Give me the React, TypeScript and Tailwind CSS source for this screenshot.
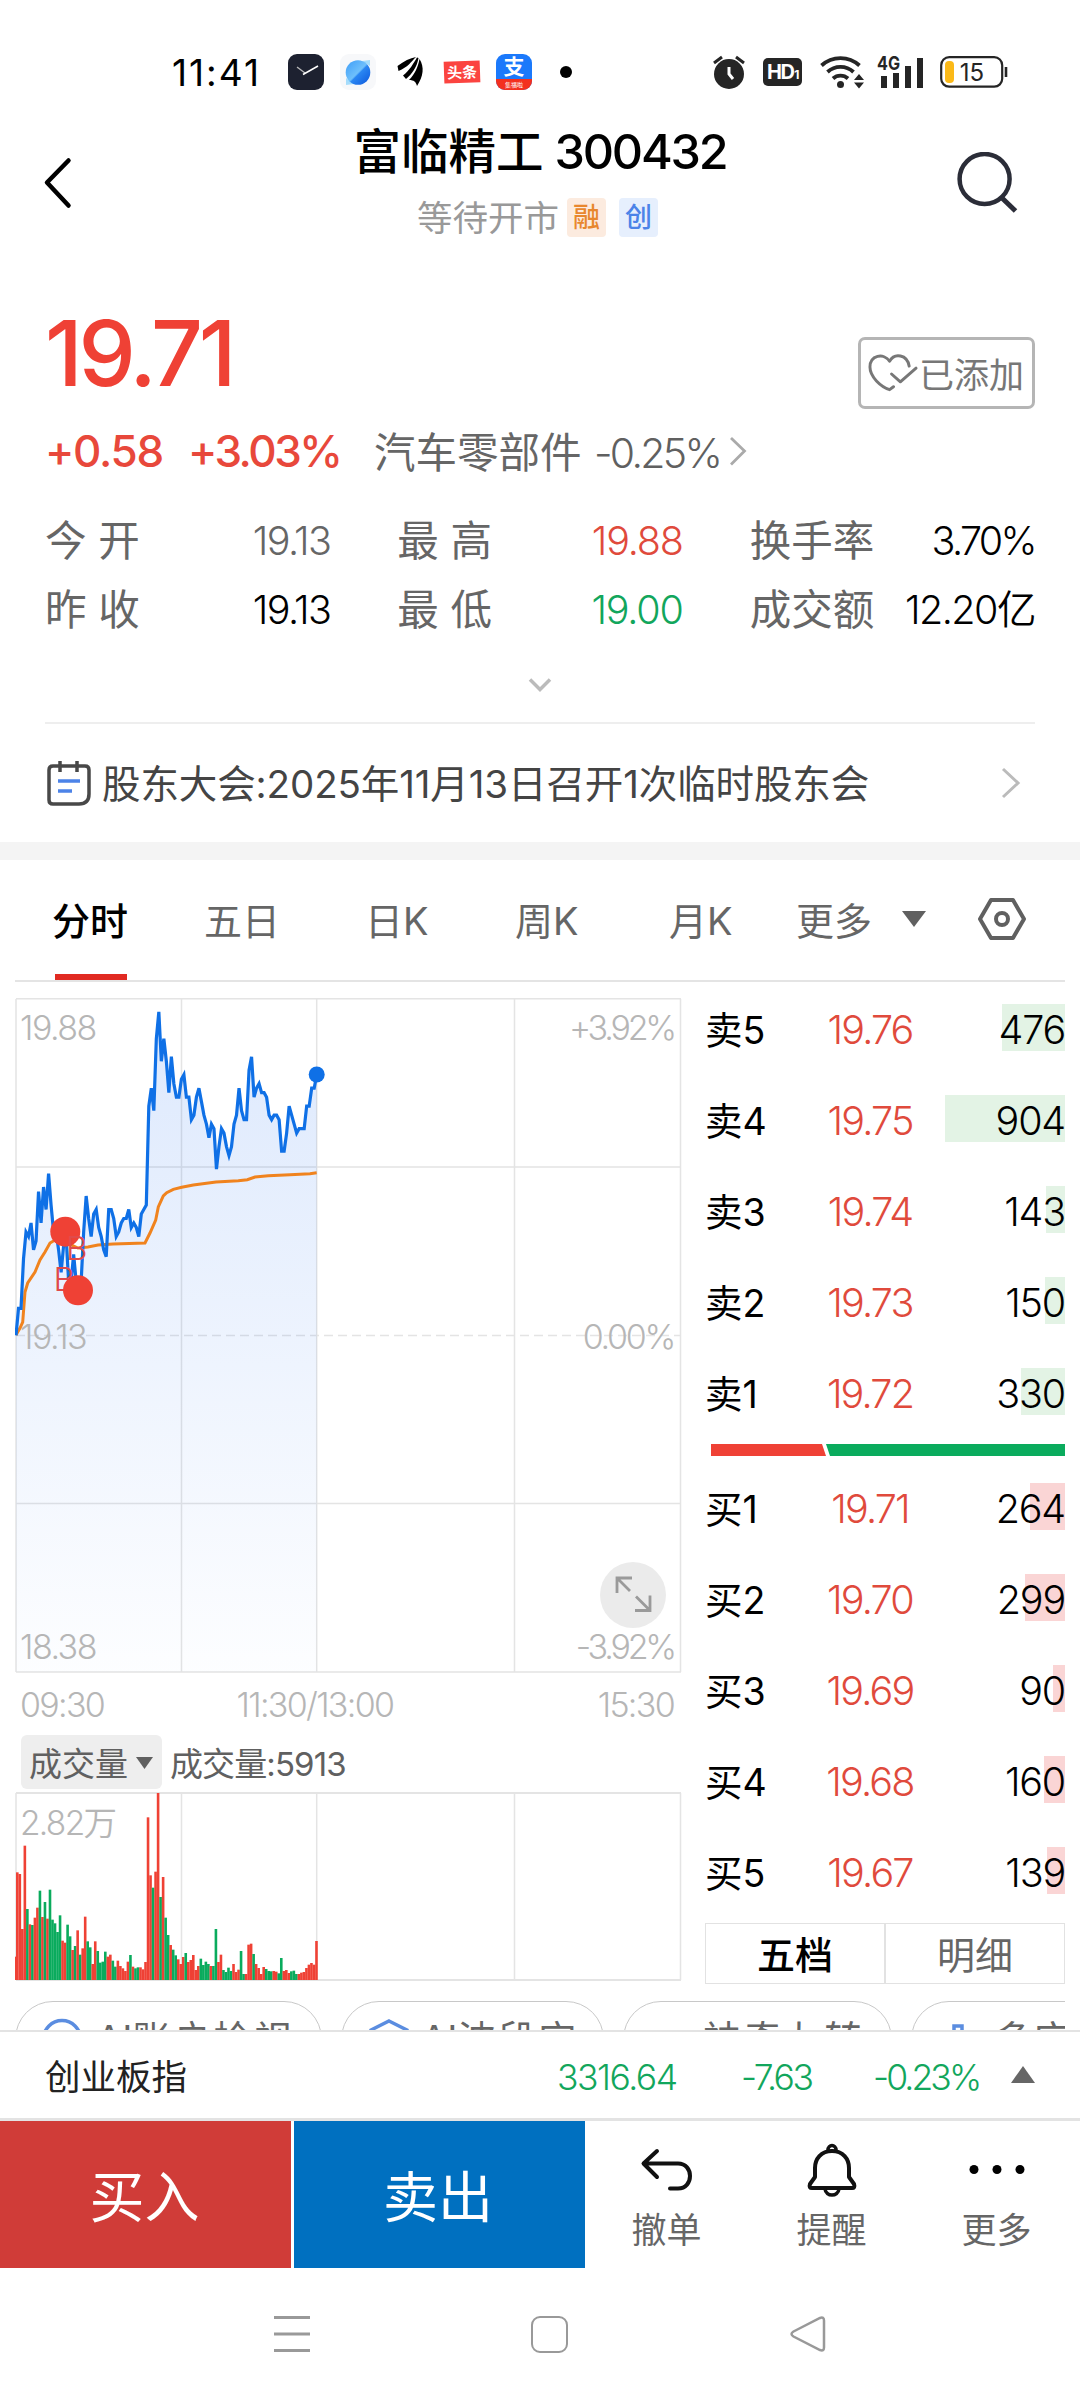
import { ReactNode } from "react";

// intraday prices, in cents above the previous close (19.13)
const prices = [
  0, 6, 6, 17, 23, 22, 25, 19, 21, 32, 25, 33, 28, 36, 29, 23, 23, 19, 14, 20,
  22, 12, 12, 18, 12, 12, 12, 23, 31, 26, 22, 27, 28, 24, 22, 19, 17.5, 28, 28,
  26, 22, 23, 25, 26, 26, 28, 24, 25, 24, 22, 27, 28, 29, 51, 55, 50, 66, 72,
  61, 66, 61, 54, 62, 56, 53, 53, 57, 58, 53, 53, 48, 49, 53, 55, 52, 49, 47,
  44, 47, 46, 37, 42, 46, 45, 42, 40, 42, 47, 49, 55, 50, 48, 48, 59, 62, 53,
  55, 56, 54, 54, 53, 49, 48, 49, 49, 48, 41, 41, 45, 51, 49, 47, 45, 46, 46,
  46, 51, 51, 55, 55, 58,
];

// negative = falling minute
const volumes = [
  70, 323, 318, 153, 403, -213, 167, -165, 187, 217, -268, 189, -234, 184,
  -271, -181, -170, -144, -194, 118, 112, -166, -131, 90, -102, 149, -76, 95,
  190, -116, -98, 48, 116, -87, -52, -55, -85, 70, 76, -58, -40, 58, 42, 35,
  27, 55, -75, 40, -35, -38, 38, 32, 54, 488, 314, -277, 325, 561, -249, 309,
  -187, -135, 105, -91, -74, 62, 48, 69, -81, 54, 60, 75, 30, 42, -64, -45,
  -55, -48, 42, -42, -153, 54, 76, -30, -24, -37, -27, 48, 24, 31, -87, -18,
  18, 106, 109, -78, 48, 36, 18, 39, -33, -27, -26, 27, 25, -20, -66, 27, 30,
  21, -26, -28, -18, 18, 22, 24, 36, 46, 51, 46, 117,
];

const average =
  "1,337 5,330 7.7,324 10,294 12.7,285 20,274 25,262 30,254 35,245 40,242 52,245 63,250 73,249 83,247 98,246 130,245 135,235 140.7,222 143.3,209 148.3,198 151.7,194.7 158.3,191.3 166.7,189.3 178.3,187 201,184 223.3,182.7 232.3,181.7 240,179 253.3,177.7 275,176.7 295,175.7 301.7,174.7";

const sells = [
  { label: "卖5", price: "19.76", amount: 476 },
  { label: "卖4", price: "19.75", amount: 904 },
  { label: "卖3", price: "19.74", amount: 143 },
  { label: "卖2", price: "19.73", amount: 150 },
  { label: "卖1", price: "19.72", amount: 330 },
];

const buys = [
  { label: "买1", price: "19.71", amount: 264 },
  { label: "买2", price: "19.70", amount: 299 },
  { label: "买3", price: "19.69", amount: 90 },
  { label: "买4", price: "19.68", amount: 160 },
  { label: "买5", price: "19.67", amount: 139 },
];

const stats = [
  { label: "今 开", value: "19.13", style: "tracking-[-1.6px] text-[#666]" },
  { label: "最 高", value: "19.88", style: "tracking-[-1.2px] text-[#e04a3c]" },
  { label: "换手率", value: "3.70%", style: "tracking-[-2.6px] text-black" },
  { label: "昨 收", value: "19.13", style: "tracking-[-1.6px] text-black" },
  { label: "最 低", value: "19.00", style: "tracking-[-1.2px] text-[#12a65c]" },
  { label: "成交额", value: "12.20亿", style: "tracking-[-1.5px] text-black" },
];

const StatusBar = () => (
  <div className="flex h-[120px] items-center pl-[172px] pt-[24px]">
    <span className="w-[116px] text-[37px] tracking-[2px]">11:41</span>
    <svg className="mr-4 size-9" viewBox="0 0 36 36">
      <rect width="36" height="36" rx="9" fill="#1d2130" />
      <path d="M9 13l8 6" stroke="#bbb" strokeWidth="1.3" />
      <path d="M15 20.500l15-8.500" stroke="#fff" strokeWidth="1.500" />
    </svg>
    <svg className="mr-4 size-9" viewBox="0 0 36 36">
      <defs>
        <linearGradient id="planet" x1="0" y1="0" x2="1" y2="1">
          <stop offset="0" stopColor="#3d9df8" />
          <stop offset="0.5" stopColor="#6fc0fb" />
          <stop offset="0.55" stopColor="#2a86f2" />
          <stop offset="1" stopColor="#0b56dc" />
        </linearGradient>
      </defs>
      <rect width="36" height="36" rx="9" fill="#f7f8fa" />
      <path d="M22 7l8-1v6zM6 24v7l8-1z" fill="#a5dcfb" />
      <circle cx="18" cy="18.500" r="12.300" fill="url(#planet)" />
    </svg>
    <svg className="mr-4 size-9" viewBox="0 0 36 36">
      <path d="M5.500 12C12 7 18 4 24 3c-5 5-8 10-17.500 14z" />
      <path d="M11 21.500C18 16 21 10 25 3.500l1.500.500C25 13 20 20 14 25z" />
      <path d="M17 26c6-6 9-13 10.500-21 5 8 4 17-2.500 27-1-4-3-6-8-6z" />
    </svg>
    <div className="mr-4 flex h-[22px] w-9 -rotate-2 items-center justify-center bg-[#fb4440] text-[15px] font-bold text-white">
      头条
    </div>
    <div className="flex size-9 flex-col items-center overflow-hidden rounded-[9px] bg-[#1b79fb] text-white">
      <span className="flex h-[25px] items-center text-[21px] font-bold">支</span>
      <span className="flex w-full grow items-center justify-center bg-[#f3301f] text-[6px]">
        集福啦
      </span>
    </div>
    <div className="ml-[28px] size-3 rounded-full bg-black" />
    <svg className="ml-[140px] h-[36px] w-[34px]" viewBox="0 0 34 36">
      <circle cx="17" cy="20" r="15" fill="#252525" />
      <path d="M2 9l8-6M32 9l-8-6" stroke="#252525" strokeWidth="3" />
      <path d="M17 13v7l4 5" stroke="#fff" strokeWidth="3" fill="none" />
    </svg>
    <div className="ml-[17px] flex h-[28px] w-[39px] items-center justify-center rounded-[5px] bg-[#252525] font-bold tracking-[-1.5px] text-white">
      <span className="text-[20px]">HD</span>
      <span className="pl-[1px] pt-1.5 text-[12px]">1</span>
    </div>
    <svg className="ml-[18px] h-[36px] w-[46px]" viewBox="0 0 46 36">
      <g fill="none" stroke="#252525" strokeWidth="3.800">
        <path d="M1.500 11.500a28 28 0 0 1 38 0" />
        <path d="M7.500 18a19 19 0 0 1 26 0" />
        <path d="M13 24.500a11 11 0 0 1 15 0" />
      </g>
      <circle cx="20.500" cy="30.500" r="3.500" fill="#252525" />
      <path d="M34 26l5-6 5 6zM34 28.500l5 6 5-6z" fill="#252525" />
    </svg>
    <svg className="ml-[11px] h-[36px] w-[48px]" viewBox="0 0 48 36">
      <text x="0" y="16" fontSize="19" fontWeight="700" fill="#252525" textLength="23" lengthAdjust="spacingAndGlyphs">
        4G
      </text>
      <path d="M4 22h6v12H4zM16 19h6v15h-6zM28 12h6v22h-6zM40 4h6v30h-6z" fill="#252525" />
    </svg>
    <svg className="ml-[15px] h-[32px] w-[68px]" viewBox="0 0 68 32">
      <rect x="1.200" y="1.200" width="61" height="29.500" rx="8" fill="none" stroke="#252525" strokeWidth="2.200" />
      <rect x="5" y="5" width="9" height="22" rx="4" fill="#fbb918" />
      <path d="M66 11v10" stroke="#252525" strokeWidth="2.600" />
      <text x="32" y="24.500" fontSize="24" fill="#252525" textAnchor="middle">
        15
      </text>
    </svg>
  </div>
);

const Header = () => (
  <div className="flex h-[130px] items-center justify-between pl-[43px] pr-[60px]">
    <svg className="mb-[5px] h-[52px] w-[30px]" viewBox="0 0 30 52" fill="none" stroke="#000" strokeWidth="4.500" strokeLinecap="round" strokeLinejoin="round">
      <path d="M25.500 3.500L4 25.500l21.500 23" />
    </svg>
    <div className="flex h-full flex-col items-center pl-[51px]">
      <h1 className="mt-[9px] flex h-[46px] items-center gap-[11px] font-medium">
        <span className="text-[47.500px]">富临精工</span>
        <span className="text-[48.500px] tracking-[-2.200px]">300432</span>
      </h1>
      <div className="mr-[5px] mt-[21px] flex h-[42px] items-center">
        <span className="pt-[4px] text-[35.500px] text-[#999]">等待开市</span>
        <span className="ml-[8px] flex size-[39px] items-center justify-center rounded-[4px] bg-[#fcebdf] text-[27px] font-medium text-[#e8872e]">
          融
        </span>
        <span className="ml-[13px] flex size-[39px] items-center justify-center rounded-[4px] bg-[#e6effd] text-[27px] font-medium text-[#4c83e8]">
          创
        </span>
      </div>
    </div>
    <svg className="mb-[4px] h-[62px] w-[64px]" viewBox="0 0 64 62" fill="none" stroke="#2b2d38" strokeWidth="4.500">
      <circle cx="28.600" cy="27" r="25" />
      <path d="M45.500 45.500L59.500 59" strokeWidth="5" />
    </svg>
  </div>
);

const Quote = () => (
  <div className="flex h-[472px] flex-col px-[45px]">
    <div className="mt-[57px] flex h-[102px] items-center justify-between">
      <span className="pb-[10px] text-[91px] font-medium tracking-[-4.200px] text-[#ef4135]">
        19.71
      </span>
      <div className="mt-[30px] flex h-[72px] w-[177px] items-center rounded-[7px] border-[3px] border-[#b5b5b5] pl-[7px] text-[35px] text-[#777]">
        <svg className="h-[40px] w-[51px]" viewBox="0 0 52 40" fill="none" stroke="#777" strokeWidth="3" strokeLinecap="round" strokeLinejoin="round">
          <path d="M42 13C40 1 27-1 22 8 16-1 2 2 2 14c0 10 11 20 20 23l4-3" />
          <path d="M24 21l9 8 16-14" />
        </svg>
        <span className="pt-[4px]">已添加</span>
      </div>
    </div>
    <div className="mt-[18px] flex h-[48px] items-center whitespace-nowrap">
      <span className="w-[143px] text-[44px] font-medium tracking-[-1.300px] text-[#e8483b]">
        +0.58
      </span>
      <span className="w-[186px] text-[44px] font-medium tracking-[-2.500px] text-[#e8483b]">
        +3.03%
      </span>
      <span className="mt-[5px] w-[220px] text-[41.500px] text-[#666]">汽车零部件</span>
      <span className="mt-[5px] w-[125px] text-[41px] font-[350] tracking-[-2.700px] text-[#606060]">
        -0.25%
      </span>
      <svg className="ml-[9px] h-[32px] w-[20px]" viewBox="0 0 20 32" fill="none" stroke="#aaa" strokeWidth="2.800">
        <path d="M3 3l13.500 13L3 29.500" />
      </svg>
    </div>
    <div className="mt-[32px] grid grid-cols-3 gap-x-[67px]">
      {stats.map((item) => (
        <div
          key={item.label}
          className="flex h-[69px] items-center justify-between whitespace-nowrap"
        >
          <span className="text-[41.500px] text-[#666]">{item.label}</span>
          <span className={`text-[39.500px] font-[350] ${item.style}`}>
            {item.value}
          </span>
        </div>
      ))}
    </div>
    <svg className="mx-auto mt-[31px] h-[18px] w-[26px]" viewBox="0 0 26 18" fill="none" stroke="#bbb" strokeWidth="3.500">
      <path d="M3 3.500l10 10 10-10" />
    </svg>
  </div>
);

const Notice = () => (
  <div className="mx-[45px] flex h-[120px] items-center border-t-2 border-[#eee]">
    <svg className="ml-[1px] h-[50px] w-[46px]" viewBox="0 0 46 50" fill="none" stroke="#484848" strokeWidth="3.500">
      <path d="M7 8h32q4 0 4 4v24q0 10-10 10H7q-4 0-4-4V12q0-4 4-4z" />
      <path d="M14 3v11M31 3v11" />
      <path d="M12 23h22M12 33h14" stroke="#4c83e8" />
    </svg>
    <span className="ml-[10px] grow whitespace-nowrap pt-[3px] text-[38.500px] tracking-[-0.100px] text-[#444]">
      股东大会:2025年11月13日召开1次临时股东会
    </span>
    <svg className="mr-[13px] h-[34px] w-[22px]" viewBox="0 0 22 34" fill="none" stroke="#bbb" strokeWidth="3">
      <path d="M3 3l15 14L3 31" />
    </svg>
  </div>
);

const Tabs = () => (
  <div className="mx-[15px] flex h-[122px] items-start border-b-2 border-[#e4e4e4] text-[38px] text-[#666]">
    <div className="ml-[37px] flex h-[120px] w-[152px] flex-col">
      <span className="flex h-[114px] items-center pt-[8px] font-medium text-black">
        分时
      </span>
      <span className="ml-[3px] h-[6px] w-[72px] bg-[#e12a22]" />
    </div>
    <span className="flex h-[122px] w-[161px] items-center">五日</span>
    <span className="flex h-[122px] w-[150px] items-center">日K</span>
    <span className="flex h-[122px] w-[154px] items-center">周K</span>
    <span className="flex h-[122px] w-[127px] items-center">月K</span>
    <span className="flex h-[122px] w-[106px] items-center">更多</span>
    <svg className="mt-[50px] h-[18px] w-[24px]" viewBox="0 0 24 18">
      <path d="M0 1h24L12 17z" fill="#606060" />
    </svg>
    <svg className="ml-[51px] mt-[37px] h-[44px] w-[50px]" viewBox="0 0 50 44" fill="none" stroke="#606060" strokeWidth="4">
      <path d="M14 3h22l11 19-11 19H14L3 22z" strokeLinejoin="round" />
      <circle cx="25" cy="22" r="6" />
    </svg>
  </div>
);

const xAt = (i: number) => 1 + (i * 300.7) / (prices.length - 1);
const yAt = (cents: number) => 337.3 - cents * 4.493;

const PriceChart = () => {
  const line = prices.map((p, i) => `${xAt(i)},${yAt(p)}`).join(" ");
  return (
    <svg className="h-[676px] w-[667px]" viewBox="0 0 667 676">
      <defs>
        <linearGradient id="area" x1="0" y1="0" x2="0" y2="1">
          <stop offset="0" stopColor="#0f62f0" stopOpacity="0.14" />
          <stop offset="1" stopColor="#0f62f0" stopOpacity="0.01" />
        </linearGradient>
      </defs>
      <g stroke="#e4e4e4" strokeWidth="1.500" fill="none">
        <path d="M1 .800h665M1 169h665M1 505.500h665M1 674h665" />
        <path d="M1 1v673M166.500 1v673M301.700 1v673M499.500 1v673M665.500 1v673" />
        <path d="M1 337.500h665" strokeDasharray="9 5" />
      </g>
      <polygon points={`1,674 ${line} 301.700,674`} fill="url(#area)" />
      <g fill="#b6b6b6" fontSize="34" fontWeight="350" letterSpacing="-1.500">
        <text x="5" y="41.500">19.88</text>
        <text x="5" y="350.500">19.13</text>
        <text x="5" y="660.500">18.38</text>
        <g textAnchor="end">
          <text x="659" y="41.500" letterSpacing="-3.200">+3.92%</text>
          <text x="659" y="350.500" letterSpacing="-2.300">0.00%</text>
          <text x="659" y="660.500" letterSpacing="-3.200">-3.92%</text>
        </g>
      </g>
      <polyline points={average} fill="none" stroke="#f0831e" strokeWidth="3" />
      <polyline points={line} fill="none" stroke="#0f70e6" strokeWidth="3.200" />
      <circle cx="301.700" cy="76.500" r="8" fill="#0f70e6" />
      <g fill="#ef4135">
        <circle cx="50.300" cy="233.700" r="15" />
        <text x="51" y="261.500" fontSize="33" fontWeight="350" fill="#e04a4a">
          B
        </text>
        <text x="38.500" y="293" fontSize="33" fontWeight="350" fill="#e04a4a">
          B
        </text>
        <circle cx="63" cy="292.300" r="15" />
      </g>
      <circle cx="618" cy="597" r="33" fill="#ebebeb" />
      <g fill="none" stroke="#9a9a9a" strokeWidth="2.800">
        <path d="M617 580h-15v15M602 580l13 13" />
        <path d="M620 612.500h15v-15M635 612.500l-14-14" />
      </g>
    </svg>
  );
};

const VolumeChart = () => (
  <svg className="h-[189px] w-[667px]" viewBox="0 0 667 189">
    <g stroke="#e4e4e4" strokeWidth="1.500" fill="none">
      <path d="M1 1h665M1 188h665" strokeWidth="2" />
      <path d="M1 1v187M166.500 1v187M301.700 1v187M499.500 1v187M665.500 1v187" />
    </g>
    <text x="5" y="43" fill="#b6b6b6" fontSize="33.500" fontWeight="350" letterSpacing="-1.700">
      2.82万
    </text>
    {volumes.map((v, i) => (
      <rect
        key={i}
        x={Math.max(0, 2.514 * i - 1.5)}
        y={188 - Math.abs(v) / 3}
        width={2.6}
        height={Math.abs(v) / 3}
        fill={v > 0 ? "#ef4135" : "#0aab5d"}
      />
    ))}
  </svg>
);

interface OrderRowProps {
  label: string;
  price: string;
  amount: number;
  barColor: string;
}

const OrderRow = ({ label, price, amount, barColor }: OrderRowProps) => (
  <div className="relative flex h-[91px] items-center pt-[7px] text-[39.500px]">
    <div
      className={`absolute right-0 top-[22px] h-[47px] ${barColor}`}
      style={{ width: (amount * 120) / 904 }}
    />
    <span className="relative w-[101px] text-[37.500px]">{label}</span>
    <span className="relative w-[128px] text-center font-[350] tracking-[-1.800px] text-[#e04a3c]">
      {price}
    </span>
    <span className="relative grow text-right font-[350] tracking-[-1.200px]">
      {amount}
    </span>
  </div>
);

const OrderBook = () => (
  <div className="ml-[23px] flex w-[360px] flex-col">
    {sells.map((row) => (
      <OrderRow key={row.label} {...row} barColor="bg-[#e3f3e5]" />
    ))}
    <svg className="mb-[5px] ml-[6px] mt-[7px] h-[12px] w-[354px]" viewBox="0 0 354 12">
      <path d="M0 0h111l4 12H0z" fill="#ef4135" />
      <path d="M115 0h239v12H119z" fill="#0aab5d" />
    </svg>
    {buys.map((row) => (
      <OrderRow key={row.label} {...row} barColor="bg-[#fad5d5]" />
    ))}
    <div className="mt-[7px] flex h-[61px] border-[1.500px] border-[#e2e2e2] text-[38px]">
      <span className="flex flex-1 items-center justify-center border-r-2 border-[#e2e2e2] pt-[3px] font-medium">
        五档
      </span>
      <span className="flex flex-1 items-center justify-center pt-[3px] text-[#666]">
        明细
      </span>
    </div>
  </div>
);

const Chip = ({ width, children }: { width: string; children: ReactNode }) => (
  <div
    className={`flex h-[76px] shrink-0 items-center rounded-[38px] border border-[#c8c8c8] ${width}`}
  >
    {children}
  </div>
);

const Chips = () => (
  <div className="mx-[15px] flex h-[29px] gap-[19px] overflow-hidden whitespace-nowrap text-[38px] tracking-[2.500px] text-[#666]">
    <Chip width="w-[307px]">
      <svg className="ml-[25px] mr-[13px] size-[42px] shrink-0" viewBox="0 0 42 42">
        <circle cx="21" cy="21" r="18.500" fill="none" stroke="#5b8de0" strokeWidth="3.500" />
      </svg>
      <span className="tracking-[0px]">AI</span>账户检视
    </Chip>
    <Chip width="w-[263px]">
      <svg className="ml-[26px] mr-[11px] size-[42px] shrink-0" viewBox="0 0 42 42">
        <path d="M21 3l18 9v18l-18 9-18-9V12z" fill="none" stroke="#5b8de0" strokeWidth="3.500" />
      </svg>
      <span className="tracking-[0px]">AI</span>波段宝
    </Chip>
    <Chip width="w-[269px]">
      <span className="ml-[79px]">神奇九转</span>
    </Chip>
    <Chip width="w-[269px]">
      <svg className="ml-[25px] mr-[15px] size-[42px] shrink-0" viewBox="0 0 42 42">
        <path d="M17 40V8h8v32M5 40V24h12M25 18h12v22" fill="none" stroke="#5b8de0" strokeWidth="3.500" />
      </svg>
      多空
    </Chip>
  </div>
);

const IndexBar = () => (
  <div className="flex h-[91px] items-center border-b-[3px] border-t-2 border-[#e3e3e3] pl-[45px] pt-[5px] text-[35.500px] text-[#12a65c]">
    <span className="w-[512px] text-[#222]">创业板指</span>
    <span className="w-[184px] font-[350] tracking-[-1.500px]">3316.64</span>
    <span className="w-[132px] font-[350] tracking-[-2.400px]">-7.63</span>
    <span className="w-[137px] font-[350] tracking-[-2.900px]">-0.23%</span>
    <svg className="mb-[7px] h-[17px] w-[26px]" viewBox="0 0 26 17">
      <path d="M1 17h24L13 0z" fill="#666" />
    </svg>
  </div>
);

const Action = ({ label, children }: { label: string; children: ReactNode }) => (
  <div className="flex flex-1 flex-col items-center pr-[2px] pt-[21px] text-[35px] text-[#666]">
    <svg className="mb-[15px] size-[56px]" viewBox="0 0 56 56" fill="none" stroke="#111" strokeWidth="4" strokeLinecap="round" strokeLinejoin="round">
      {children}
    </svg>
    {label}
  </div>
);

const BottomBar = () => (
  <div className="flex h-[147px]">
    <div className="mr-[3px] flex w-[291px] items-center justify-center bg-[#d03c38] pr-[2px] pt-[5px] text-[55px] text-white">
      买入
    </div>
    <div className="flex w-[291px] items-center justify-center bg-[#0070c0] pr-[3px] pt-[5px] text-[55px] text-white">
      卖出
    </div>
    <Action label="撤单">
      <path d="M18 9L4.500 21.500 18 35M5 21.500h34c16 0 16 25 0 25h-8" />
    </Action>
    <Action label="提醒">
      <path d="M28 9c-11 0-17 8-17 17v9l-5 7c-1 3 0 4 2 4h40c2 0 3-1 2-4l-5-7v-9c0-9-6-17-17-17z" />
      <path d="M24 8c0-6 8-6 8 0M21 47c1 8 13 8 14 0" strokeWidth="3.500" />
    </Action>
    <Action label="更多">
      <g fill="#000" stroke="none">
        <circle cx="5" cy="27.500" r="4.500" />
        <circle cx="28" cy="27.500" r="4.500" />
        <circle cx="51" cy="27.500" r="4.500" />
      </g>
    </Action>
  </div>
);

const SystemNav = () => (
  <div className="flex h-[132px] items-center pl-[272px]">
    <svg className="h-[40px] w-[40px]" viewBox="0 0 40 40" stroke="#999" strokeWidth="3">
      <path d="M2 3.500h36M2 20h36M2 36.500h36" />
    </svg>
    <div className="ml-[219px] size-[37px] rounded-[9px] border-[2.500px] border-[#999]" />
    <svg className="ml-[221px] h-[40px] w-[40px]" viewBox="0 0 40 40" fill="none" stroke="#999" strokeWidth="2.500">
      <path d="M4.500 17.500L31 4q4-1.500 4 2.500v27q0 4-4 2.500L4.500 22.500q-4-2.500 0-5z" />
    </svg>
  </div>
);

const App = () => {
  return (
    <div className="flex h-[2400px] w-[1080px] flex-col overflow-hidden bg-white font-['Inter','Noto_Sans_CJK_SC',sans-serif] leading-none text-black">
      <StatusBar />
      <Header />
      <Quote />
      <Notice />
      <div className="h-[18px] bg-[#f4f4f4]" />
      <Tabs />
      <div className="flex h-[1019px] pl-[15px]">
        <div className="flex w-[667px] flex-col pt-[16px]">
          <PriceChart />
          <div className="flex h-[61px] items-center justify-between pl-[5px] pr-[8px] text-[34px] font-[350] tracking-[-1.700px] text-[#b6b6b6]">
            <span>09:30</span>
            <span className="pr-[72px]">11:30/13:00</span>
            <span>15:30</span>
          </div>
          <div className="ml-[6px] flex h-[57px] items-start text-[33px] text-[#606060]">
            <span className="flex h-[54px] w-[141px] items-center gap-[8px] rounded-[6px] bg-[#eee] pl-[8px] pt-[5px]">
              成交量
              <svg className="mb-[3px] h-[12px] w-[17px]" viewBox="0 0 17 12">
                <path d="M0 0h17L8.500 12z" fill="#606060" />
              </svg>
            </span>
            <span className="ml-[8px] flex h-[54px] items-center pt-[5px] tracking-[-0.900px]">
              成交量:5913
            </span>
          </div>
          <VolumeChart />
        </div>
        <OrderBook />
      </div>
      <Chips />
      <IndexBar />
      <BottomBar />
      <SystemNav />
    </div>
  );
};

export default App;
